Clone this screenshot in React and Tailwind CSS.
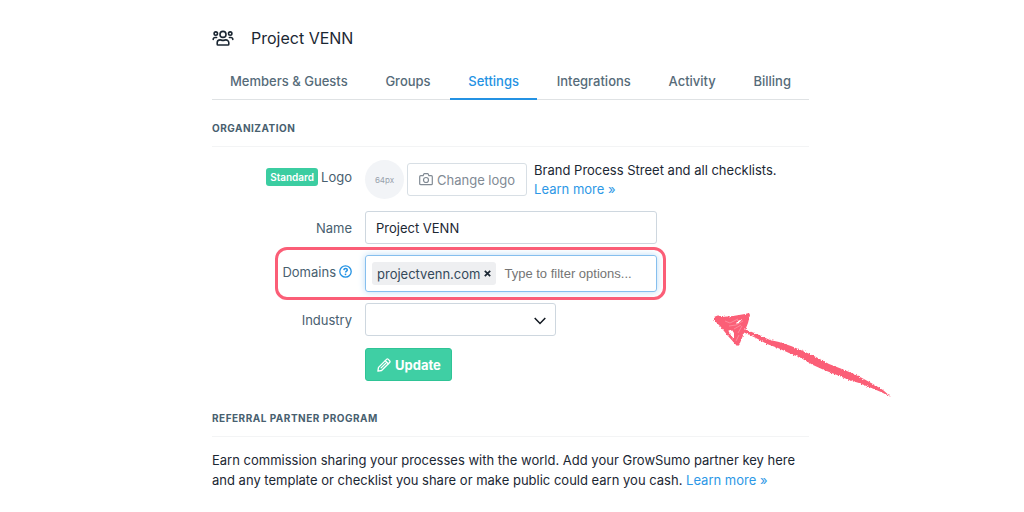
import { useState } from 'react';

const TABS = ['Members & Guests', 'Groups', 'Settings', 'Integrations', 'Activity', 'Billing'];

function TeamIcon() {
  return (
    <svg width="22" height="16" viewBox="0 0 22 16" fill="none" stroke="currentColor" strokeWidth="1.6" strokeLinecap="round" strokeLinejoin="round" aria-hidden="true">
      <circle cx="11" cy="4.4" r="3" />
      <circle cx="3.8" cy="3.6" r="1.7" />
      <circle cx="18.2" cy="3.6" r="1.7" />
      <path d="M5.2 14.2v-1.4a2.9 2.9 0 0 1 2.9-2.9c1 0 1.500.5 2.900.5s1.900-.5 2.900-.5a2.900 2.900 0 0 1 2.900 2.900v1.400q0 .8-.8.8H6q-.8 0-.8-.8z" />
      <path d="M1.200 9.400c0-1.200.8-1.900 1.900-1.900h1.500M20.800 9.400c0-1.200-.8-1.900-1.900-1.900h-1.500" />
    </svg>
  );
}

function CameraIcon() {
  return (
    <svg width="14" height="13" viewBox="0 0 14 13" fill="none" stroke="currentColor" strokeWidth="1.2" strokeLinejoin="round" aria-hidden="true">
      <path d="M1.700 2.700h2.400l.7-1.600q.2-.4.600-.4h3.200q.4 0 .6.400l.7 1.600h2.400q1 0 1 1v7q0 1-1 1H1.700q-1 0-1-1v-7q0-1 1-1z" />
      <circle cx="7" cy="7" r="2.500" />
    </svg>
  );
}

function PencilIcon() {
  return (
    <svg width="14" height="14" viewBox="0 0 14 14" fill="none" stroke="currentColor" strokeWidth="1.300" strokeLinecap="round" strokeLinejoin="round" aria-hidden="true">
      <path d="M.9 13.100l.6-3.700 8-8q.9-.9 1.800 0l1.300 1.300q.9.9 0 1.800l-8 8z" />
      <path d="M8.300 2.700l3 3M4.100 9.900l4.800-4.800" />
    </svg>
  );
}

function HelpIcon() {
  return (
    <svg width="13" height="13" viewBox="0 0 13 13" fill="none" stroke="currentColor" strokeWidth="1.300" aria-hidden="true">
      <circle cx="6.500" cy="6.500" r="5.700" />
      <path d="M4.800 5.100c.1-1 .8-1.600 1.800-1.600s1.700.6 1.700 1.500c0 1.200-1.700 1.200-1.700 2.500" strokeWidth="1.500" />
      <circle cx="6.500" cy="9.300" r=".9" fill="currentColor" stroke="none" />
    </svg>
  );
}

function Arrow() {
  return (
    <svg className="pointer-events-none absolute top-[58px] left-[501px]" width="180" height="88" viewBox="0 0 180 88" fill="#fb5e77" aria-hidden="true">
      <defs>
        <filter id="rough" x="-5%" y="-5%" width="110%" height="110%">
          <feTurbulence type="fractalNoise" baseFrequency=".8" numOctaves="2" seed="7" />
          <feDisplacementMap in="SourceGraphic" scale="3" xChannelSelector="R" yChannelSelector="G" />
        </filter>
      </defs>
      <g filter="url(#rough)">
        <path fillRule="evenodd" d="M1 4L6 2L8 4L20 3L32 1L36 0L37 2L35 10L31 20L27 30L24 33L15 23L7 13L1 7zM15 17L17 21L21 26L21 20L19 17zM22 11L25 8L29 6L26 10z" />
        <path d="M30 16L34 17L46 22L57 27L66 29L78 33L90 38L103 44L116 51L129 56L141 61L149 65L160 71L170 77L178 84L168 79L156 74L146 70L136 67L124 62L111 57L100 52L88 45L76 40L65 35L54 31L43 25L30 19z" />
      </g>
      <g fill="none" stroke="#fff" strokeWidth=".6" opacity=".45">
        <path d="M12 8l5 2 8-4M16 13l7-1 7-4M21 16l7-4M25 20l4-7M23 28l3-6" />
      </g>
    </svg>
  );
}

function SectionTitle({ children }) {
  return (
    <h2 className="border-b border-[#f3f4f5] pb-[10px] text-[10px] leading-4 font-bold tracking-wider text-[#48606f] uppercase">
      {children}
    </h2>
  );
}

function Row({ label, htmlFor, children }) {
  return (
    <div className="grid grid-cols-[140px_1fr] items-center gap-[13px]">
      <label htmlFor={htmlFor} className="text-right text-[#48606f]">{label}</label>
      <div>{children}</div>
    </div>
  );
}

export default function App() {
  const [tab, setTab] = useState('Settings');
  const [name, setName] = useState('Project VENN');
  const [domains, setDomains] = useState(['projectvenn.com']);

  return (
    <div className="min-h-screen overflow-x-hidden bg-white font-['Inter',sans-serif] text-[13px] leading-5 text-[#1b2733]">
      <main className="mx-auto max-w-[600px] pt-6 pr-[3px]">
        <header className="flex h-7 items-center gap-[17px]">
          <TeamIcon />
          <h1 className="text-base">{name}</h1>
        </header>

        <nav className="mt-3 flex h-9 justify-between border-b border-[#dfe2e4]">
          {TABS.map((t) => (
            <a
              key={t}
              href="#"
              onClick={() => setTab(t)}
              className={
                t === tab
                  ? '-mb-px border-b-2 border-[#2492e3] px-[18px] pt-[7px] font-medium text-[#2492e3]'
                  : 'px-[18px] pt-[7px] font-medium text-[#566b79]'
              }
            >
              {t}
            </a>
          ))}
        </nav>

        <section className="mt-5">
          <SectionTitle>Organization</SectionTitle>
          <form className="mt-[13px]" onSubmit={(e) => e.preventDefault()}>
            <Row
              htmlFor="logo"
              label={
                <span className="flex items-center justify-end gap-[3px] pb-[5px]">
                  <span className="rounded-[3px] bg-[#3bcda1] px-1 text-[10px] leading-[18px] font-semibold text-white">Standard</span>
                  Logo
                </span>
              }
            >
              <div className="flex items-center">
                <span className="flex size-[39px] shrink-0 items-center justify-center rounded-full bg-[#f2f4f7] text-[8px] text-[#98a2ad]">64px</span>
                <button id="logo" type="button" className="ml-[3px] flex h-[33px] shrink-0 items-center gap-1 rounded-[3px] border border-[#d8dfe5] px-[11px] text-[#818a94]">
                  <CameraIcon />
                  Change logo
                </button>
                <p className="ml-[7px] leading-[19px] whitespace-nowrap">
                  Brand Process Street and all checklists.
                  <br />
                  <a href="#" className="text-[#2d98e6]">Learn more »</a>
                </p>
              </div>
            </Row>

            <div className="mt-3">
              <Row htmlFor="name" label="Name">
                <input
                  id="name"
                  value={name}
                  onChange={(e) => setName(e.target.value)}
                  className="block h-[33px] w-[292px] rounded-[3px] border border-[#ced7df] px-[10px] outline-none"
                />
              </Row>
            </div>

            <div className="relative mt-[11px]">
              <Row
                htmlFor="domains"
                label={
                  <span className="flex items-center justify-end gap-[3px] pb-1">
                    Domains
                    <span className="text-[#2492e3]"><HelpIcon /></span>
                  </span>
                }
              >
                <div className="flex h-[37px] w-[292px] items-center gap-2 rounded-[3px] border border-[#86bfee] px-[6px] shadow-[0_0_7px_#bcdcf5]">
                  {domains.map((d) => (
                    <span key={d} className="flex h-[23px] items-center gap-1 rounded-[3px] bg-[#eeeff1] px-[5px] text-[#34495a]">
                      {d}
                      <button type="button" aria-label="Remove" onClick={() => setDomains(domains.filter((x) => x !== d))} className="text-[#1b2733]">
                        <svg width="7" height="7" viewBox="0 0 7 7" stroke="currentColor" strokeWidth="1.700" aria-hidden="true">
                          <path d="M.8.8l5.400 5.400M6.200.8L.8 6.200" />
                        </svg>
                      </button>
                    </span>
                  ))}
                  <input
                    id="domains"
                    placeholder="Type to filter options..."
                    className="min-w-0 flex-1 font-['Liberation_Sans',sans-serif] outline-none placeholder:text-[#757575]"
                  />
                </div>
              </Row>
              <div className="pointer-events-none absolute -top-2 left-[63px] h-[53px] w-[391px] rounded-xl border-3 border-[#fb5e77]" />
              <Arrow />
            </div>

            <div className="mt-[11px]">
              <Row htmlFor="industry" label="Industry">
                <div className="relative w-[191px]">
                  <select id="industry" className="block h-[33px] w-full appearance-none rounded-[3px] border border-[#ced7df] px-[10px]">
                    <option value=""></option>
                  </select>
                  <svg className="pointer-events-none absolute top-[14px] right-[10px]" width="12" height="8" viewBox="0 0 12 8" fill="none" stroke="#111820" strokeWidth="1.500" aria-hidden="true">
                    <path d="M.7 1L6 6.500 11.300 1" />
                  </svg>
                </div>
              </Row>
            </div>

            <button type="submit" className="mt-3 ml-[153px] flex h-[33px] items-center gap-1 rounded-[3px] border border-[#2fc496] bg-[#3fcfa4] pr-[10px] pl-[11px] font-bold text-white">
              <PencilIcon />
              Update
            </button>
          </form>
        </section>

        <section className="mt-[29px]">
          <SectionTitle>Referral Partner Program</SectionTitle>
          <p className="mt-[13px]">
            Earn commission sharing your processes with the world. Add your GrowSumo partner key here and any template or checklist you share or make public could earn you cash.{' '}
            <a href="#" className="inline-block text-[#2d98e6]">Learn more »</a>
          </p>
        </section>
      </main>
    </div>
  );
}
